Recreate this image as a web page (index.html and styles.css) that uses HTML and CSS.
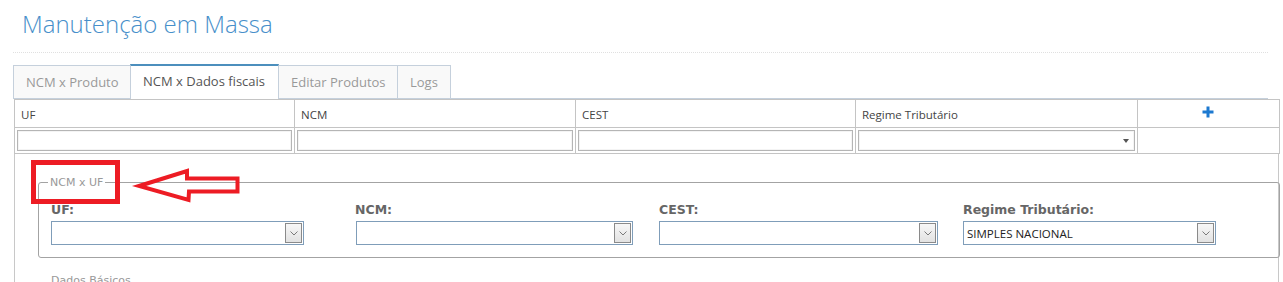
FILE: index.html
```html
<!DOCTYPE html>
<html lang="pt-BR">
<head>
<meta charset="utf-8">
<title>Manutenção em Massa</title>
<link rel="stylesheet" href="styles.css">
</head>
<body>
<div class="page">
  <h1 class="title">Manutenção em Massa</h1>
  <div class="divider"></div>

  <div class="tabs">
    <div class="tab">NCM x Produto</div>
    <div class="tab active">NCM x Dados fiscais</div>
    <div class="tab">Editar Produtos</div>
    <div class="tab">Logs</div>
  </div>

  <table class="grid">
    <colgroup>
      <col class="c1"><col class="c2"><col class="c3"><col class="c4"><col class="c5">
    </colgroup>
    <tr class="head">
      <th>UF</th>
      <th>NCM</th>
      <th>CEST</th>
      <th>Regime Tributário</th>
      <th class="add">
        <svg width="12" height="12" viewBox="0 0 12 12"><path d="M6 0.5v11M0.5 6h11" stroke="#1c79d0" stroke-width="3"/></svg>
      </th>
    </tr>
    <tr class="filter">
      <td><div class="fin"></div></td>
      <td><div class="fin"></div></td>
      <td><div class="fin"></div></td>
      <td><div class="fin fsel"><span class="tri"></span></div></td>
      <td></td>
    </tr>
  </table>

  <div class="panel">
    <fieldset class="box">
      <legend>NCM x UF</legend>
      <div class="fields">
        <div class="field">
          <label>UF:</label>
          <div class="combo w-uf"><span class="val"></span><span class="btn"><svg width="8" height="5" viewBox="0 0 8 5"><path d="M0.5 0.5L4 4L7.5 0.5" fill="none" stroke="#7a7a7a" stroke-width="1"/></svg></span></div>
        </div>
        <div class="field">
          <label>NCM:</label>
          <div class="combo w-ncm"><span class="val"></span><span class="btn"><svg width="8" height="5" viewBox="0 0 8 5"><path d="M0.5 0.5L4 4L7.5 0.5" fill="none" stroke="#7a7a7a" stroke-width="1"/></svg></span></div>
        </div>
        <div class="field">
          <label>CEST:</label>
          <div class="combo w-cest"><span class="val"></span><span class="btn"><svg width="8" height="5" viewBox="0 0 8 5"><path d="M0.5 0.5L4 4L7.5 0.5" fill="none" stroke="#7a7a7a" stroke-width="1"/></svg></span></div>
        </div>
        <div class="field">
          <label>Regime Tributário:</label>
          <div class="combo w-reg"><span class="val">SIMPLES NACIONAL</span><span class="btn"><svg width="8" height="5" viewBox="0 0 8 5"><path d="M0.5 0.5L4 4L7.5 0.5" fill="none" stroke="#7a7a7a" stroke-width="1"/></svg></span></div>
        </div>
      </div>
    </fieldset>
    <div class="sub">Dados Básicos</div>
  </div>
</div>

<svg class="annot" width="1283" height="282" viewBox="0 0 1283 282">
  <rect x="33.5" y="162.5" width="84" height="39" fill="none" stroke="#ed1c24" stroke-width="5"/>
  <polygon points="139,186 187,171 187,178.5 237.5,178.5 237.5,191.5 189,191.5 188.5,200" fill="none" stroke="#ed1c24" stroke-width="4" stroke-linejoin="miter"/>
</svg>
</body>
</html>
```

FILE: styles.css
```css
html, body {
  margin: 0;
  padding: 0;
  background: #ffffff;
  overflow: hidden;
}
body {
  position: relative;
  width: 1283px;
  height: 282px;
  font-family: "Open Sans", "Noto Sans", sans-serif;
  color: #333;
}
.page {
  padding-left: 13px;
}
.title {
  margin: 0;
  padding: 7px 0 0 9px;
  height: 44px;
  box-sizing: border-box;
  font-family: "Open Sans", sans-serif;
  font-weight: 300;
  font-size: 24px;
  line-height: 33px;
  color: #478fca;
}
.divider {
  width: 1255px;
  margin-top: 8px;
  border-top: 1px dotted #e0e0e0;
}
.tabs {
  display: flex;
  align-items: flex-end;
  width: 1255px;
  height: 34px;
  margin-top: 12px;
  border-bottom: 1px solid #c5d0dc;
  box-sizing: border-box;
}
.tab {
  height: 33px;
  box-sizing: border-box;
  padding: 0 12px;
  border: 1px solid #c5d0dc;
  border-bottom: none;
  margin-right: -1px;
  background: #f9f9f9;
  color: #999;
  font-size: 13px;
  line-height: 32px;
  white-space: nowrap;
}
.tab:nth-child(1) { width: 118px; }
.tab:nth-child(2) { width: 149px; }
.tab:nth-child(3) { width: 120px; }
.tab:nth-child(4) { width: 54px; }
.tab.active {
  height: 35px;
  margin-bottom: -1px;
  border-top: 2px solid #4c8fbd;
  background: #fff;
  color: #555;
  line-height: 31px;
  position: relative;
}
.grid {
  margin-left: 1px;
  width: 1265px;
  border-collapse: collapse;
  table-layout: fixed;
}
.grid th, .grid td {
  border: 1px solid #c4c4c4;
  padding: 0;
}
.grid .c1 { width: 280px; }
.grid .c2 { width: 281px; }
.grid .c3 { width: 280px; }
.grid .c4 { width: 282px; }
.grid .c5 { width: 142px; }
.head th {
  height: 28px;
  box-sizing: border-box;
  text-align: left;
  font-weight: 400;
  font-size: 11.5px;
  color: #444;
  padding-left: 6px;
  padding-top: 1px;
}
.head th.add {
  text-align: center;
  padding-left: 0;
}
.head th.add svg {
  display: block;
  margin: 0 auto;
  position: relative;
  left: -1px;
  top: -2px;
}
.filter td {
  height: 26px;
  padding: 2px;
  box-sizing: border-box;
}
.fin {
  height: 21px;
  box-sizing: border-box;
  border: 1px solid #b5b5b5;
  box-shadow: inset 0 0 0 1px #f4f4f4;
  background: #fff;
}
.fsel {
  display: flex;
  align-items: center;
  justify-content: flex-end;
  padding-right: 5px;
}
.tri {
  width: 0;
  height: 0;
  border-left: 3.5px solid transparent;
  border-right: 3.5px solid transparent;
  border-top: 4px solid #555;
}
.panel {
  margin-left: 1px;
  width: 1265px;
  height: 140px;
  box-sizing: border-box;
  border-left: 1px solid #c8c8c8;
  border-right: 1px solid #c8c8c8;
  padding: 22px 22px 0 23px;
}
.box {
  margin: 0;
  padding: 0 12px 12px 12px;
  border: 1px solid #a3a3a3;
  border-radius: 3px;
}
.box legend {
  margin-left: -3px;
  padding: 0 2px;
  font-family: "DejaVu Sans", Verdana, sans-serif;
  font-size: 11px;
  line-height: 13px;
  color: #999;
}
.fields {
  display: grid;
  grid-template-columns: 304px 304px 304px 304px;
  margin-top: 13px;
}
.field label {
  display: block;
  font-family: "DejaVu Sans", Verdana, sans-serif;
  font-weight: 700;
  font-size: 12.5px;
  line-height: 16px;
  height: 19px;
  color: #666;
}
.combo {
  display: flex;
  align-items: center;
  height: 24px;
  box-sizing: border-box;
  border: 1px solid #7f9db9;
  background: #fff;
  padding: 0 1px 0 3px;
}
.w-uf { width: 253px; }
.w-ncm { width: 277px; margin-left: 1px; }
.w-cest { width: 279px; }
.w-reg { width: 253px; }
.combo .val {
  flex: 1;
  font-family: "Open Sans", sans-serif;
  font-size: 11.5px;
  color: #222;
  white-space: nowrap;
}
.combo .btn {
  width: 17px;
  height: 20px;
  box-sizing: border-box;
  border: 1px solid #8a8a8a;
  background: linear-gradient(#f7f7f7, #e2e2e2);
  display: flex;
  align-items: center;
  justify-content: center;
}
.sub {
  margin-top: 16px;
  margin-left: 13px;
  font-family: "DejaVu Sans", Verdana, sans-serif;
  font-size: 11px;
  color: #999;
}
.annot {
  position: absolute;
  left: 0;
  top: 0;
  pointer-events: none;
}
```
